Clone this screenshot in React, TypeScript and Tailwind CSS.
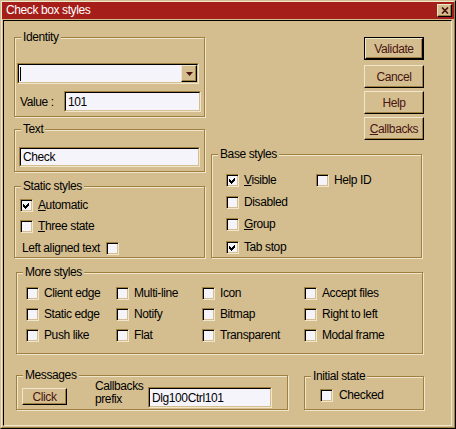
import React from "react";

// classic raised / sunken edges in the tan scheme
const sunkenOuter = "border border-t-[#a08040] border-l-[#a08040] border-b-[#f0e6cc] border-r-[#f0e6cc]";
const sunkenInner = "border border-t-black border-l-black border-b-[#d4be90] border-r-[#d4be90]";
const raised = "border border-t-[#f0e6cc] border-l-[#f0e6cc] border-b-black border-r-black shadow-[inset_-1px_-1px_0_#a08040]";

function Group({ label, className, children }: { label: string; className: string; children?: React.ReactNode }) {
  return (
    <div className={"border border-[#a08040] shadow-[inset_1px_1px_0_#f0e6cc,1px_1px_0_#f0e6cc] " + className}>
      <div className="-mt-[7px] ml-[6px] w-fit bg-[#d4be90] px-[2px] leading-[13px]">{label}</div>
      {children}
    </div>
  );
}

function Box({ checked }: { checked?: boolean }) {
  return (
    <span className={"flex h-[13px] w-[13px] shrink-0 items-center justify-center bg-[#f6f4fb] shadow-[inset_1px_1px_0_#000,inset_-1px_-1px_0_#d4be90] " + sunkenOuter}>
      {checked && (
        <svg width="7" height="7" viewBox="0 0 7 7" shapeRendering="crispEdges">
          <path d="M0 2L2 4L6 0V3L2 7L0 5Z" fill="#000" />
        </svg>
      )}
    </span>
  );
}

function Check({ label, checked, className = "" }: { label: React.ReactNode; checked?: boolean; className?: string }) {
  return (
    <div className={"flex items-center gap-[5px] " + className}>
      <Box checked={checked} />
      <span className="leading-[13px] whitespace-nowrap">{label}</span>
    </div>
  );
}

function Field({ className, children }: { className: string; children?: React.ReactNode }) {
  return (
    <div className={sunkenOuter + " " + className}>
      <div className={"flex h-full items-center bg-[#f6f4fb] pl-[1px] " + sunkenInner}>{children}</div>
    </div>
  );
}

function Btn({ children, className }: { children: React.ReactNode; className: string }) {
  return (
    <div className={"flex items-center justify-center text-[#4a1410] " + raised + " " + className}>{children}</div>
  );
}

export default function App() {
  return (
    <div className="h-[429px] w-[456px] overflow-hidden border border-t-[#d4be90] border-l-[#d4be90] border-b-black border-r-black bg-[#d4be90] font-['Liberation_Sans',Arial,sans-serif] text-[12px] tracking-[-0.4px] text-black">
      <div className="flex h-full flex-col border border-t-[#f0e6cc] border-l-[#f0e6cc] border-b-[#a08040] border-r-[#a08040]">
        {/* title bar */}
        <div className="flex h-[17px] shrink-0 items-center justify-between bg-[#a61e1a] pl-[4px] text-white">
          <span className="leading-[13px]">Check box styles</span>
          <div className={"mr-[2px] flex h-[13px] w-[15px] items-center justify-center bg-[#d4be90] " + raised}>
            <svg width="8" height="7" viewBox="0 0 8 7">
              <path d="M1 0.5L7 6.5M7 0.5L1 6.5" stroke="#4a1410" strokeWidth="1.7" />
            </svg>
          </div>
        </div>

        {/* client area */}
        <div className="mt-[1px] mb-[1px] ml-[1px] mr-[2px] flex-1 border border-t-black border-l-black border-b-[#f0e6cc] border-r-[#f0e6cc]">
          <div className="flex items-start pl-[10px] pt-[16px]">
            {/* left column */}
            <div className="flex w-[191px] flex-col">
              <Group label="Identity" className="h-[80px]">
                <div className={"mt-[19px] ml-[2px] h-[21px] w-[182px] " + sunkenOuter}>
                  <div className={"flex h-full items-center justify-between bg-[#f6f4fb] " + sunkenInner}>
                    <span className="ml-[1px] h-[14px] w-[1px] bg-black" />
                    <div className={"flex h-[17px] w-[16px] items-center justify-center bg-[#d4be90] " + raised}>
                      <svg width="7" height="4" viewBox="0 0 7 4">
                        <path d="M0 0H7L3.5 4Z" fill="#4a1410" />
                      </svg>
                    </div>
                  </div>
                </div>
                <div className="mt-[7px] flex items-center">
                  <span className="ml-[5px] w-[44px]">Value :</span>
                  <Field className="h-[21px] w-[137px]">
                    <span className="pl-[1px]">101</span>
                  </Field>
                </div>
              </Group>

              <Group label="Text" className="mt-[12px] h-[43px]">
                <Field className="mt-[11px] ml-[4px] h-[20px] w-[181px]">
                  <span className="pl-[1px]">Check</span>
                </Field>
              </Group>

              <Group label="Static styles" className="mt-[14px] h-[72px]">
                <Check className="mt-[6px] ml-[5px]" checked label={<><u>A</u>utomatic</>} />
                <Check className="mt-[8px] ml-[5px]" label={<><u>T</u>hree state</>} />
                <div className="mt-[9px] ml-[7px] flex items-center">
                  <span className="w-[84px] leading-[13px]">Left aligned text</span>
                  <Box />
                </div>
              </Group>
            </div>

            {/* right column */}
            <div className="ml-[6px] flex w-[213px] flex-col">
              <div className="flex w-[60px] flex-col self-end">
                <div className="h-[23px] border border-black">
                  <div className="flex h-full items-center justify-center border border-t-[#f0e6cc] border-l-[#f0e6cc] border-b-black border-r-black shadow-[inset_-1px_-1px_0_#a08040] text-[#4a1410]">
                    Validate
                  </div>
                </div>
                <Btn className="mt-[5px] h-[23px]">Cancel</Btn>
                <Btn className="mt-[3px] h-[23px]">Help</Btn>
                <Btn className="mt-[3px] h-[23px]">
                  <span><u>C</u>allbacks</span>
                </Btn>
              </div>

              <Group label="Base styles" className="mt-[14px] h-[104px] w-[211px]">
                <div className="mt-[13px] ml-[14px] flex items-start">
                  <div className="flex w-[90px] flex-col">
                    <Check checked label={<><u>V</u>isible</>} />
                    <Check className="mt-[9px]" label="Disabled" />
                    <Check className="mt-[9px]" label={<><u>G</u>roup</>} />
                    <Check className="mt-[10px]" checked label="Tab stop" />
                  </div>
                  <Check label="Help ID" />
                </div>
              </Group>
            </div>
          </div>

          <Group label="More styles" className="mt-[14px] ml-[12px] h-[82px] w-[407px]">
            <div className="mt-[8px] ml-[9px] grid grid-cols-[90px_86px_102px_auto] gap-y-[8px]">
              <Check label="Client edge" />
              <Check label="Multi-line" />
              <Check label="Icon" />
              <Check label="Accept files" />
              <Check label="Static edge" />
              <Check label="Notify" />
              <Check label="Bitmap" />
              <Check label="Right to left" />
              <Check label="Push like" />
              <Check label="Flat" />
              <Check label="Transparent" />
              <Check label="Modal frame" />
            </div>
          </Group>

          <div className="mt-[21px] ml-[12px] flex items-start">
            <Group label="Messages" className="h-[35px] w-[272px]">
              <div className="flex items-start">
                <Btn className="mt-[6px] ml-[5px] h-[17px] w-[45px]">Click</Btn>
                <div className="-mt-[2px] ml-[28px] flex w-[53px] flex-col">
                  <span className="leading-[13px]">Callbacks</span>
                  <span className="leading-[13px]">prefix</span>
                </div>
                <Field className="mt-[5px] h-[21px] w-[124px]">
                  <span className="pl-[1px]">Dlg100Ctrl101</span>
                </Field>
              </div>
            </Group>

            <Group label="Initial state" className="mt-[1px] ml-[16px] h-[34px] w-[120px]">
              <div className="mt-[6px] ml-[15px] flex items-center gap-[6px]">
                <Box />
                <span className="leading-[13px]">Checked</span>
              </div>
            </Group>
          </div>
        </div>
      </div>
    </div>
  );
}
